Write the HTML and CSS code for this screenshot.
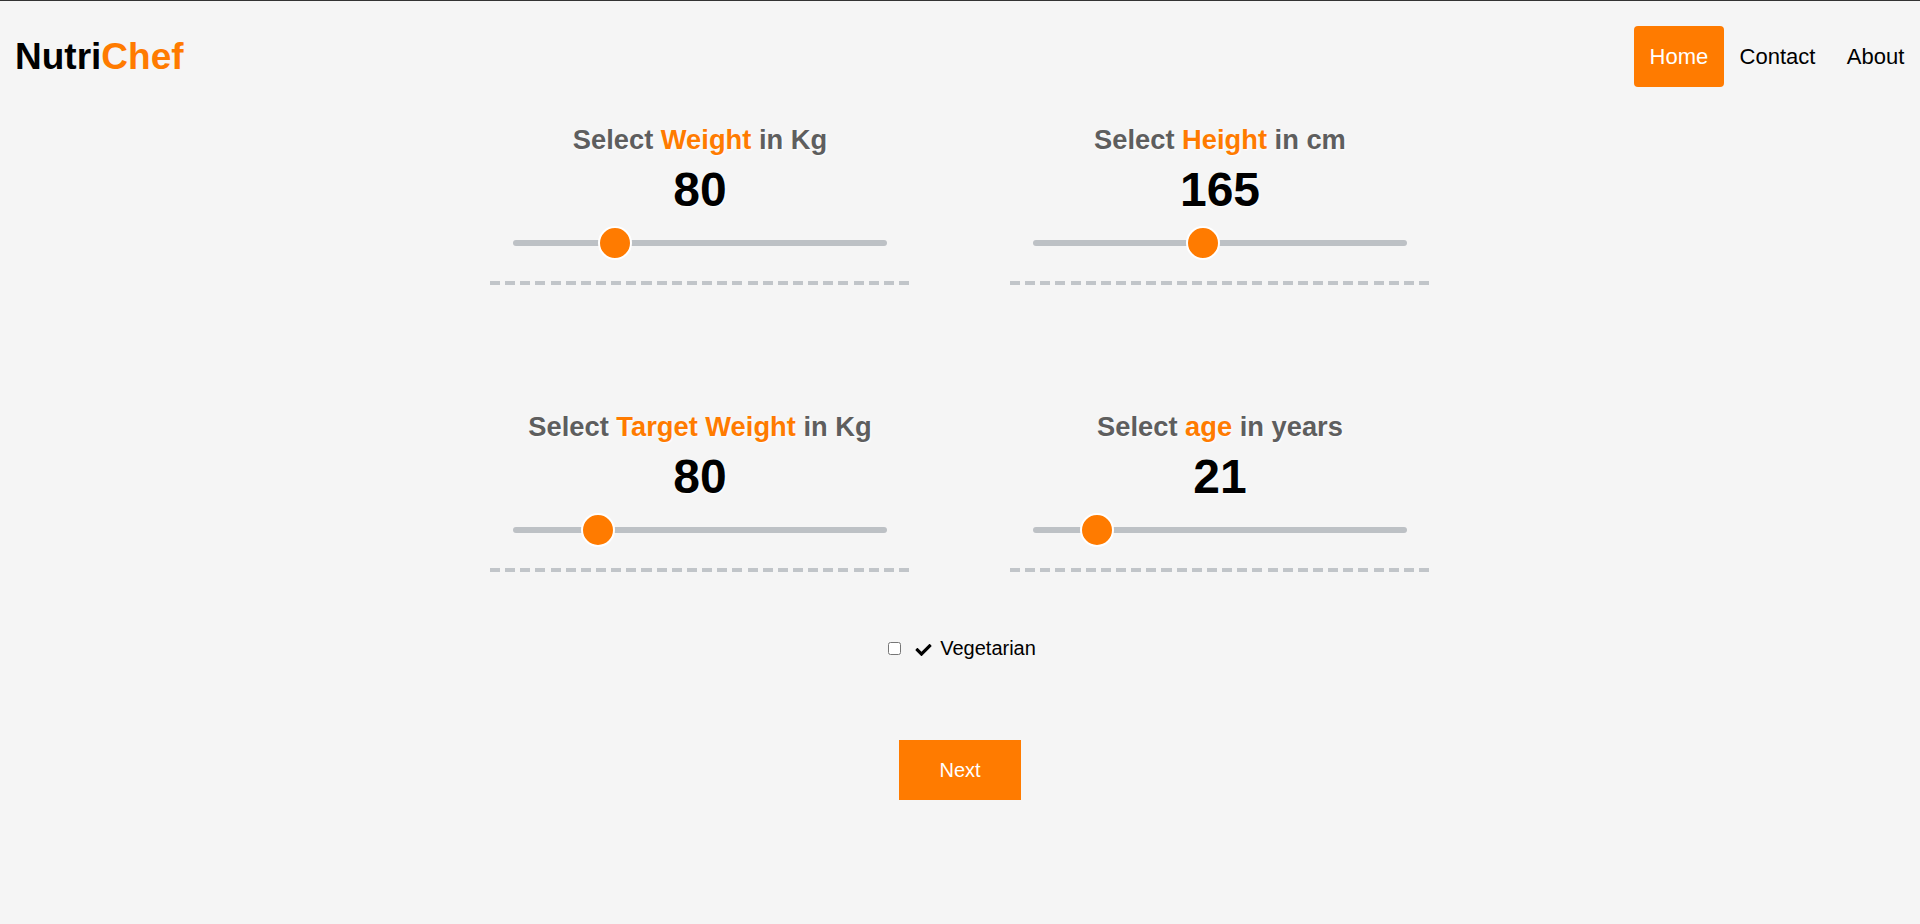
FILE: index.html
```html
<!DOCTYPE html>
<html lang="en">
<head>
<meta charset="utf-8">
<title>NutriChef</title>
<link rel="stylesheet" href="styles.css">
</head>
<body>
<header class="header">
  <div class="logo">Nutri<span class="accent">Chef</span></div>
  <nav class="nav">
    <a class="nav-link active" href="#">Home</a>
    <a class="nav-link" href="#">Contact</a>
    <a class="nav-link" href="#">About</a>
  </nav>
</header>
<main class="main">
  <form class="form">
    <div class="grid">
      <div class="field">
        <h2 class="field-title">Select <span class="accent">Weight</span> in Kg</h2>
        <div class="field-value">80</div>
        <div class="slider-wrap"><input class="range" type="range" min="30" max="230" value="80"></div>
      </div>
      <div class="field">
        <h2 class="field-title">Select <span class="accent">Height</span> in cm</h2>
        <div class="field-value">165</div>
        <div class="slider-wrap"><input class="range" type="range" min="120" max="220" value="165"></div>
      </div>
      <div class="field">
        <h2 class="field-title">Select <span class="accent">Target Weight</span> in Kg</h2>
        <div class="field-value">80</div>
        <div class="slider-wrap"><input class="range" type="range" min="40" max="240" value="80"></div>
      </div>
      <div class="field">
        <h2 class="field-title">Select <span class="accent">age</span> in years</h2>
        <div class="field-value">21</div>
        <div class="slider-wrap"><input class="range" type="range" min="10" max="90" value="21"></div>
      </div>
    </div>
    <div class="veg">
      <input class="veg-box" type="checkbox" id="veg"> <label for="veg"><svg class="check-icon" viewBox="0 65 512 382" width="17" height="12"><path d="M173.898 439.404l-166.4-166.4c-9.997-9.997-9.997-26.206 0-36.204l36.203-36.204c9.997-9.998 26.207-9.998 36.204 0L192 312.69 432.095 72.596c9.997-9.997 26.207-9.997 36.204 0l36.203 36.204c9.997 9.997 9.997 26.206 0 36.204l-294.4 294.401c-9.998 9.997-26.207 9.997-36.204-.001z" fill="#000"/></svg> Vegetarian</label>
    </div>
    <button class="next-btn" type="button">Next</button>
  </form>
</main>
</body>
</html>
```

FILE: styles.css
```css
html, body {
  margin: 0;
  padding: 0;
}

body {
  background: #f5f5f5;
  border-top: 1px solid #333;
  font-family: "Liberation Sans", Arial, sans-serif;
  color: #000;
  min-height: 923px;
  box-sizing: border-box;
}

.accent {
  color: #ff7b00;
}

.header {
  display: flex;
  justify-content: space-between;
  align-items: center;
  padding: 25px 0 0 15px;
}

.logo {
  font-size: 37px;
  font-weight: bold;
  line-height: 42px;
  color: #000;
}

.nav {
  display: flex;
}

.nav-link {
  display: block;
  padding: 18px 15.7px;
  font-size: 22px;
  line-height: 25px;
  color: #000;
  text-decoration: none;
  border-radius: 4px;
}

.nav-link.active {
  background: #ff7b00;
  color: #fff;
}

.main {
  padding-top: 37px;
}

.grid {
  display: grid;
  grid-template-columns: 420px 420px;
  column-gap: 100px;
  row-gap: 126px;
  justify-content: center;
}

.field {
  text-align: center;
  padding-bottom: 25px;
  background-image: repeating-linear-gradient(90deg, #c1c5c9 0, #c1c5c9 10px, transparent 10px, transparent 15.15px);
  background-size: 100% 4px;
  background-position: left bottom;
  background-repeat: no-repeat;
}

.field-title {
  margin: 0;
  font-size: 27.3px;
  line-height: 31px;
  font-weight: bold;
  color: #5e5e5e;
  text-shadow: 1px 1px 2px #fff;
}

.field-value {
  margin-top: 7px;
  font-size: 48px;
  line-height: 55px;
  font-weight: bold;
  color: #000;
  text-shadow: 1px 1px 2px #fff;
}

.slider-wrap {
  margin-top: 9px;
  height: 34px;
  display: flex;
  align-items: center;
  justify-content: center;
}

.range {
  -webkit-appearance: none;
  appearance: none;
  width: 374px;
  height: 6px;
  margin: 0;
  border-radius: 3px;
  background: #bdc1c5;
  outline: none;
}

.range::-webkit-slider-thumb {
  -webkit-appearance: none;
  appearance: none;
  width: 34px;
  height: 34px;
  box-sizing: border-box;
  border-radius: 50%;
  border: 2px solid #fff;
  background: #ff7b00;
  cursor: pointer;
}

.veg {
  margin-top: 65px;
  text-align: center;
  font-size: 20px;
  line-height: 23px;
}

.check-icon {
  margin: 0 3px 0 5px;
  vertical-align: -1px;
}

.next-btn {
  display: block;
  margin: 80px auto 0;
  padding: 18px 40px;
  border: none;
  border-radius: 0;
  background: #ff7b00;
  color: #fff;
  font-family: "Liberation Sans", Arial, sans-serif;
  font-size: 20px;
  line-height: 24px;
  cursor: pointer;
}
```
